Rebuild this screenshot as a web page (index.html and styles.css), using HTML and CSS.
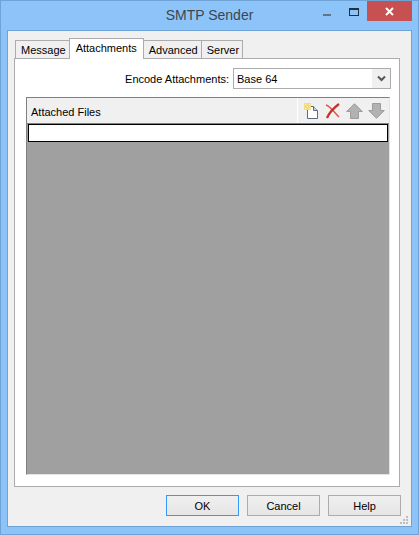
FILE: index.html
```html
<!DOCTYPE html>
<html lang="en">
<head>
  <meta charset="UTF-8">
  <title>SMTP Sender</title>
  <link rel="stylesheet" href="styles.css">
</head>
<body>
  <div class="window">
    <div class="titlebar">
      <div></div>
      <div class="title">SMTP Sender</div>
      <div class="controls">
        <div class="ctl-min"></div>
        <div class="ctl-max"></div>
        <div class="ctl-close">
          <svg width="9" height="9" viewBox="0 0 9 9"><path d="M1 1L8 8M8 1L1 8" stroke="#fff" stroke-width="2" fill="none"/></svg>
        </div>
      </div>
    </div>
    <div class="client">
      <div class="tabs">
        <div class="tab">Message</div>
        <div class="tab active">Attachments</div>
        <div class="tab">Advanced</div>
        <div class="tab">Server</div>
      </div>
      <div class="panel">
        <div class="encode-row">
          <label>Encode Attachments:</label>
          <div class="select">
            <span class="select-value">Base 64</span>
            <span class="select-arrow">
              <svg width="9" height="7" viewBox="0 0 9 7"><path d="M1 1.5L4.5 5L8 1.5" stroke="#555" stroke-width="2" fill="none"/></svg>
            </span>
          </div>
        </div>
        <div class="grid">
          <div class="grid-head">
            <div class="grid-title">Attached Files</div>
            <div class="grid-tools">
              <svg class="tool-new" width="15" height="16" viewBox="0 0 15 16">
                <path d="M3.5 3.5H9.5L13.5 7.5V15.5H3.5Z" fill="#fff" stroke="#5a6b7d"/>
                <path d="M9.5 3.5V7.5H13.5" fill="#c8d6e4" stroke="#5a6b7d"/>
                <path d="M0 0H7V7H0Z" fill="#efdc84"/>
                <path d="M1 1H2V2H1ZM5 1H6V2H5ZM3 3H4V4H3ZM1 5H2V6H1ZM5 5H6V6H5Z" fill="#fdf8c8"/>
              </svg>
              <svg class="tool-del" width="15" height="16" viewBox="0 0 15 16">
                <path d="M1 2C5 3 10 10 14 14" stroke="#e0564a" stroke-width="1.5" fill="none"/>
                <path d="M14 1C10 4 5 8 2 15" stroke="#c9302a" stroke-width="2.2" fill="none"/>
              </svg>
              <svg class="tool-up" width="17" height="16" viewBox="0 0 17 16"><path d="M8.5 .7L16.3 8.5H12.5V15.5H4.5V8.5H.7Z" fill="#b2b2b2" stroke="#9c9c9c"/></svg>
              <svg class="tool-down" width="17" height="16" viewBox="0 0 17 16"><path d="M8.5 15.3L16.3 7.5H12.5V.5H4.5V7.5H.7Z" fill="#b2b2b2" stroke="#9c9c9c"/></svg>
            </div>
          </div>
          <div class="grid-row"></div>
          <div class="grid-empty"></div>
        </div>
      </div>
      <div class="footer">
        <button class="btn default">OK</button>
        <button class="btn">Cancel</button>
        <button class="btn">Help</button>
        <div class="grip">
          <svg width="8" height="8" viewBox="0 0 8 8"><path d="M6 0H8V2H6ZM3 3H5V5H3ZM6 3H8V5H6ZM0 6H2V8H0ZM3 6H5V8H3ZM6 6H8V8H6Z" fill="#bdbdbd"/></svg>
        </div>
      </div>
    </div>
  </div>
</body>
</html>
```

FILE: styles.css
```css
* {
  box-sizing: border-box;
  margin: 0;
  padding: 0;
}

html, body {
  height: 100%;
}

body {
  font-family: "Liberation Sans", Arial, sans-serif;
  font-size: 11px;
  color: #000;
  background: #8cc4f9;
}

.window {
  height: 535px;
  display: flex;
  flex-direction: column;
  background: #8cc4f9;
  border: 1px solid #6fa3d6;
  padding: 0 6px 7px 6px;
}

.titlebar {
  height: 29px;
  display: grid;
  grid-template-columns: 1fr auto 1fr;
  flex-shrink: 0;
}

.title {
  font-size: 14px;
  color: #3c4650;
  padding-top: 6px;
}

.controls {
  display: flex;
  justify-content: flex-end;
  align-items: flex-start;
}

.ctl-min {
  width: 8px;
  height: 2px;
  background: #5f7488;
  margin: 13px 18px 0 0;
}

.ctl-max {
  width: 10px;
  height: 8px;
  border: 1px solid #22303c;
  border-top-width: 2px;
  margin: 7px 8px 0 0;
}

.ctl-close {
  width: 45px;
  height: 20px;
  background: #c75050;
  display: flex;
  align-items: center;
  justify-content: center;
}

.client {
  flex: 1;
  display: flex;
  flex-direction: column;
  background: #f0f0f0;
  border: 1px solid #6fa3d6;
  padding: 7px 11px 0 6px;
  min-height: 0;
}

.tabs {
  display: flex;
  height: 20px;
  padding-left: 2px;
  position: relative;
  z-index: 1;
  align-items: flex-end;
}

.tab {
  height: 18px;
  padding: 3px 3px 0 5px;
  background: #f0f0f0;
  border: 1px solid #acacac;
  border-bottom: none;
  margin-left: -1px;
}

.tab.active {
  height: 21px;
  margin-bottom: -1px;
  padding: 3px 6px 0 6px;
  background: #fff;
}

.panel {
  height: 429px;
  background: #fff;
  border: 1px solid #acacac;
  padding: 9px 9px 11px 11px;
  display: flex;
  flex-direction: column;
}

.encode-row {
  display: flex;
  justify-content: flex-end;
  align-items: center;
  gap: 4px;
  height: 21px;
  margin: 0 -1px 8px 0;
}

.select {
  width: 158px;
  height: 21px;
  display: flex;
  align-items: center;
  border: 1px solid #acacac;
  background: #fff;
}

.select-value {
  flex: 1;
  padding-left: 3px;
  height: 17px;
  line-height: 19px;
}

.select-arrow {
  width: 18px;
  height: 19px;
  background: #f0f0f0;
  display: flex;
  align-items: center;
  justify-content: center;
}

.grid {
  flex: 1;
  display: flex;
  flex-direction: column;
  border: 1px solid #e3e3e3;
  border-top-color: #808080;
  border-left-color: #808080;
  background: #a0a0a0;
}

.grid-head {
  height: 26px;
  display: flex;
  background: #f0f0f0;
  border-bottom: 1px solid #808080;
}

.grid-title {
  flex: 1;
  padding: 8px 0 0 4px;
  border-right: 1px solid #fff;
}

.grid-tools {
  width: 91px;
  display: flex;
  align-items: center;
  padding-left: 6px;
}

.tool-del {
  margin-left: 6px;
}

.tool-up {
  margin-left: 6px;
}

.tool-down {
  margin-left: 5px;
}

.grid-row {
  height: 18px;
  background: #fff;
  border: 1px solid #000;
  margin: 0 1px;
}

.grid-empty {
  flex: 1;
  background: #a0a0a0;
}

.footer {
  flex: 1;
  display: flex;
  justify-content: flex-end;
  align-items: flex-start;
  gap: 8px;
  padding-top: 8px;
  margin-right: -1px;
  position: relative;
}

.btn {
  width: 73px;
  height: 21px;
  font-family: "Liberation Sans", Arial, sans-serif;
  font-size: 11px;
  border: 1px solid #acacac;
  background: linear-gradient(#f0f0f0, #e5e5e5);
  color: #000;
}

.btn.default {
  border-color: #3399ff;
}

.grip {
  position: absolute;
  right: -7px;
  bottom: 2px;
  width: 8px;
  height: 8px;
  line-height: 0;
}
```
